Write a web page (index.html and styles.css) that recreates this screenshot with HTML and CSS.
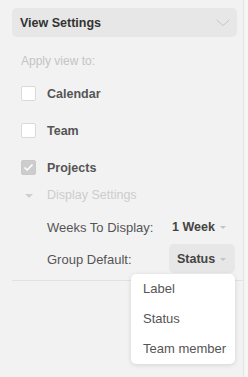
FILE: index.html
```html
<!DOCTYPE html>
<html>
<head>
<meta charset="utf-8">
<link rel="stylesheet" href="styles.css">
</head>
<body>
<div class="panel">
  <div class="header">
    <span class="title">View Settings</span>
    <svg class="chev" width="14" height="8" viewBox="0 0 14 8"><polyline points="0.5,0.8 7,6.6 13.5,0.8" fill="none" stroke="#c2c2c2" stroke-width="0.9"/></svg>
  </div>
  <div class="apply">Apply view to:</div>
  <div class="check-row"><span class="box"></span><span class="label">Calendar</span></div>
  <div class="check-row"><span class="box"></span><span class="label">Team</span></div>
  <div class="check-row"><span class="box checked"><svg width="11" height="9" viewBox="0 0 11 9"><polyline points="1.5,4.5 4.2,7 9.5,1.5" fill="none" stroke="#fff" stroke-width="1.6"/></svg></span><span class="label">Projects</span></div>
  <div class="display-row"><span class="tri-big"></span><span class="muted">Display Settings</span></div>
  <div class="set-row">
    <span class="set-label">Weeks To Display:</span>
    <span class="weeks">1 Week<span class="caret"></span></span>
  </div>
  <div class="set-row">
    <span class="set-label">Group Default:</span>
    <span class="select">Status<span class="caret"></span>
      <div class="menu">
        <div class="item">Label</div>
        <div class="item">Status</div>
        <div class="item">Team member</div>
      </div>
    </span>
  </div>
  <div class="divider"></div>
</div>
</body>
</html>
```
FILE: styles.css
```css
html, body {
  margin: 0;
  padding: 0;
  background: #f5f5f5;
  height: 100%;
}
body {
  font-family: "Liberation Sans", Arial, sans-serif;
  color: #555;
}
.panel {
  box-sizing: border-box;
  width: 244px;
  height: 377px;
  background: #f2f2f2;
  border-right: 1px solid #e4e4e4;
  padding: 8px 6px 0 12px;
}
.header {
  height: 29px;
  background: #e7e7e7;
  border-radius: 5px;
  display: flex;
  align-items: center;
  justify-content: space-between;
  padding: 0 7px 0 8px;
}
.title {
  font-weight: bold;
  font-size: 12.5px;
  color: #333;
}
.chev {
  display: block;
  margin-top: 1px;
}
.apply {
  margin-top: 16px;
  padding-left: 9px;
  font-size: 12px;
  line-height: 16px;
  color: #c4c4c4;
}
.check-row {
  margin-top: 0;
  height: 37px;
  display: flex;
  align-items: center;
  padding-left: 9px;
}
.apply + .check-row {
  margin-top: 6px;
}
.box {
  box-sizing: border-box;
  width: 15px;
  height: 15px;
  background: #fff;
  border: 1px solid #dadada;
  border-radius: 2px;
  display: flex;
  align-items: center;
  justify-content: center;
}
.box.checked {
  background: #cdcdcd;
  border-color: #c9c9c9;
}
.box svg {
  display: block;
}
.label {
  margin-left: 11px;
  font-weight: bold;
  font-size: 12.5px;
  color: #555;
}
.display-row {
  height: 18px;
  display: flex;
  align-items: center;
  padding-left: 13px;
}
.tri-big {
  width: 0;
  height: 0;
  border-left: 4.5px solid transparent;
  border-right: 4.5px solid transparent;
  border-top: 4px solid #cfcfcf;
  margin-top: 1px;
}
.muted {
  margin-left: 14px;
  font-size: 12.5px;
  color: #cdcdcd;
}
.set-row {
  height: 30px;
  display: flex;
  align-items: center;
  padding-left: 35px;
  font-size: 13px;
  margin-top: 2px;
}
.display-row + .set-row {
  margin-top: 8px;
}
.set-label {
  width: 122px;
  color: #555;
}
.weeks {
  padding-left: 3px;
  font-weight: bold;
  font-size: 12.5px;
  color: #444;
  display: flex;
  align-items: center;
}
.caret {
  width: 0;
  height: 0;
  border-left: 3.5px solid transparent;
  border-right: 3.5px solid transparent;
  border-top: 3.5px solid #c4c4c4;
  margin-left: 5px;
  margin-top: 1px;
}
.select {
  position: relative;
  height: 29px;
  box-sizing: border-box;
  width: 66px;
  padding: 0 8px;
  background: #e7e7e7;
  border-radius: 5px;
  font-weight: bold;
  font-size: 12.5px;
  color: #444;
  display: flex;
  align-items: center;
  align-self: flex-start;
}
.menu {
  position: absolute;
  top: 30px;
  right: 0;
  width: 104px;
  background: #fff;
  border-radius: 5px;
  box-shadow: 0 1px 5px rgba(0, 0, 0, 0.13);
  z-index: 2;
}
.item {
  height: 30px;
  line-height: 30px;
  padding-left: 12px;
  font-weight: normal;
  font-size: 13px;
  color: #555;
}
.divider {
  margin-top: 6px;
  margin-right: -6px;
  border-top: 1px solid #e2e2e2;
}
```
